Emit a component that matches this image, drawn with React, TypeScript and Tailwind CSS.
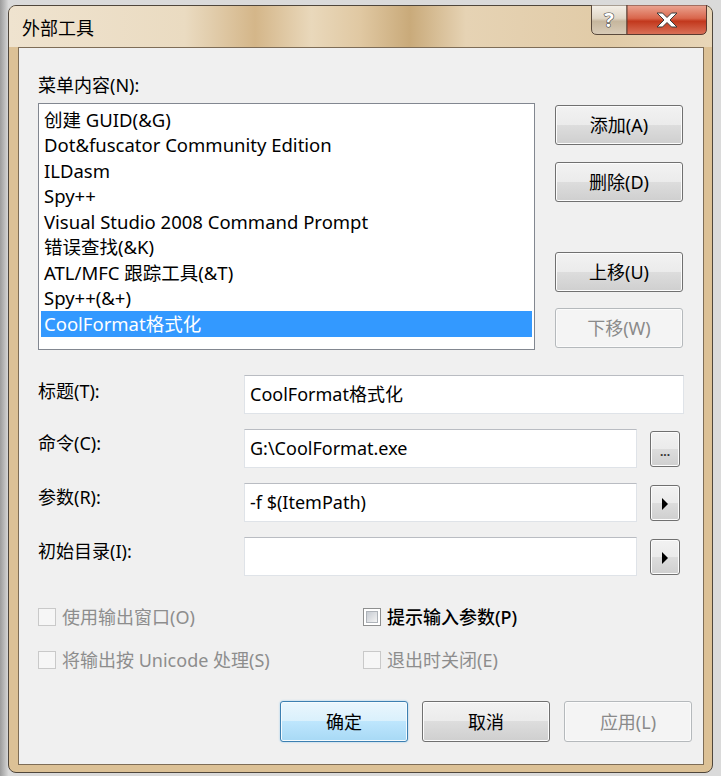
import React from "react";

const FONT = "font-['Noto_Sans','Noto_Sans_CJK_SC',sans-serif]";

function Btn({
  children,
  kind,
  className,
}: {
  children: React.ReactNode;
  kind: "normal" | "default" | "disabled";
  className?: string;
}) {
  const look =
    kind === "default"
      ? "border-[#3c7fb1] bg-[linear-gradient(#eaf6fd_0%,#d9f0fc_50%,#bee6fd_50%,#a7d9f5_100%)] shadow-[inset_0_0_0_1px_#f4fbfe,0_0_2px_#8cc6ec] text-black"
      : kind === "disabled"
      ? "border-[#b5b9bc] bg-[#f4f4f4] text-[#8a8a8a] shadow-[inset_0_0_0_1px_#fbfbfb]"
      : "border-[#707070] bg-[linear-gradient(#f2f2f2_0%,#ebebeb_50%,#dddddd_50%,#cfcfcf_100%)] shadow-[inset_0_0_0_1px_#fcfcfc] text-black";
  return (
    <div
      className={`flex items-center justify-center rounded-[3px] border text-[18px] leading-none ${look} ${className ?? ""}`}
    >
      {children}
    </div>
  );
}

function SmallBtn({ children }: { children: React.ReactNode }) {
  return (
    <div className="ml-[13px] mt-[2px] flex h-[36px] w-[30px] items-center justify-center rounded-[3px] border border-[#707070] bg-[linear-gradient(#f2f2f2_0%,#ebebeb_50%,#dddddd_50%,#cfcfcf_100%)] shadow-[inset_0_0_0_1px_#fcfcfc]">
      {children}
    </div>
  );
}

function Arrow() {
  return (
    <svg width="8" height="12" viewBox="0 0 8 12" className="mt-[2px]">
      <path d="M1 0 L7 6 L1 12 Z" fill="#000" />
    </svg>
  );
}

function Check({
  label,
  disabled,
  bold,
}: {
  label: string;
  disabled?: boolean;
  bold?: boolean;
}) {
  return (
    <div className="flex h-[18px] items-center">
      {disabled ? (
        <div className="h-[18px] w-[18px] border border-[#c9c9c9] bg-[#f6f6f6]" />
      ) : (
        <div className="flex h-[18px] w-[18px] items-center justify-center border border-[#8e8f8f] bg-white">
          <div className="h-[12px] w-[12px] border border-[#aeb3b9] bg-[linear-gradient(135deg,#c6cbd2,#f3f3f3)]" />
        </div>
      )}
      <span
        className={`ml-[6px] text-[18px] leading-[22px] ${disabled ? "text-[#8d8d8d]" : "text-black"} ${bold ? "font-medium" : ""}`}
      >
        {label}
      </span>
    </div>
  );
}

function CaptionButtons() {
  return (
    <svg width="116" height="30" viewBox="0 0 116 30" className="block">
      <defs>
        <linearGradient id="helpG" x1="0" y1="0" x2="0" y2="1">
          <stop offset="0" stopColor="#f5f1ea" />
          <stop offset="0.45" stopColor="#e0d6c6" />
          <stop offset="0.55" stopColor="#c6b69d" />
          <stop offset="1" stopColor="#d9ccb8" />
        </linearGradient>
        <linearGradient id="closeG" x1="0" y1="0" x2="0" y2="1">
          <stop offset="0" stopColor="#eba693" />
          <stop offset="0.45" stopColor="#d9664c" />
          <stop offset="0.55" stopColor="#c2381d" />
          <stop offset="1" stopColor="#da7259" />
        </linearGradient>
      </defs>
      <path d="M0.5 0 L0.5 24 Q0.5 29.5 6 29.5 L36 29.5 L36 0 Z" fill="url(#helpG)" stroke="#5a4a3c" />
      <path d="M36 0 L36 29.5 L110 29.5 Q115.5 29.5 115.5 24 L115.5 0 Z" fill="url(#closeG)" stroke="#5a3a30" />
      <text
        x="18"
        y="22"
        textAnchor="middle"
        fontFamily="Noto Sans, sans-serif"
        fontWeight="bold"
        fontSize="20"
        fill="#fff"
        stroke="#444"
        strokeWidth="1.2"
        paintOrder="stroke"
      >
        ?
      </text>
      <path
        d="M66 8 L71.5 8 L76 12.5 L80.5 8 L86 8 L79 15 L86 22 L80.5 22 L76 17.5 L71.5 22 L66 22 L73 15 Z"
        fill="#fff"
        stroke="#3a3a3a"
        strokeWidth="1"
        strokeLinejoin="round"
      />
    </svg>
  );
}

const items = [
  "创建 GUID(&G)",
  "Dot&fuscator Community Edition",
  "ILDasm",
  "Spy++",
  "Visual Studio 2008 Command Prompt",
  "错误查找(&K)",
  "ATL/MFC 跟踪工具(&T)",
  "Spy++(&+)",
  "CoolFormat格式化",
];

export default function App() {
  return (
    <div className={`h-[776px] w-[721px] bg-[#f4f4f4] ${FONT}`}>
      <div className="flex h-[776px] w-[721px] bg-linear-to-r from-[#9c9c9c] from-0% to-[#dadada] to-[1.2%] pl-[8px] pt-[5px]">
        <div className="h-[768px] w-[705px] rounded-[8px] border border-[#4f463b] bg-[#dcc196]">
          {/* title bar */}
          <div className="h-[41px] rounded-t-[7px] bg-[linear-gradient(90deg,#efe3cf_0%,#eadbc1_25%,#d4b689_35%,#e9d8bb_43%,#e0c8a2_50%,#c9aa7a_57%,#e6d3b4_65%,#e1cba7_85%,#e8d6b8_100%)] pl-[13px] pr-[5px]">
            <div className="flex items-start justify-between">
              <div className="mt-[11px] text-[18px] leading-[22px] text-black">外部工具</div>
              <div className="mt-[-1px]">
                <CaptionButtons />
              </div>
            </div>
          </div>
          {/* client area */}
          <div className="ml-[9px] h-[718px] w-[686px] border border-[#7e6d57] bg-[#f0f0f0] pl-[19px] pr-[11px] pt-[26px]">
            {/* top section */}
            <div className="flex">
              <div className="w-[497px]">
                <div className="h-[22px] text-[18px] leading-[22px] text-black">菜单内容(N):</div>
                <div className="mt-[7px] h-[247px] w-[497px] border border-[#828790] bg-white px-[2px] pt-[3px]">
                  {items.map((it, i) => (
                    <div
                      key={i}
                      className={`flex h-[25.5px] items-center whitespace-pre pl-[3px] text-[18.5px] leading-none ${
                        i === items.length - 1 ? "bg-[#3399ff] text-white" : "text-black"
                      }`}
                    >
                      {it}
                    </div>
                  ))}
                </div>
              </div>
              <div className="ml-[20px] flex w-[128px] flex-col pt-[31px]">
                <Btn kind="normal" className="h-[40px] w-[128px]">添加(A)</Btn>
                <Btn kind="normal" className="mt-[17px] h-[40px] w-[128px]">删除(D)</Btn>
                <Btn kind="normal" className="mt-[50px] h-[40px] w-[128px]">上移(U)</Btn>
                <Btn kind="disabled" className="mt-[16px] h-[40px] w-[128px]">下移(W)</Btn>
              </div>
            </div>

            {/* form */}
            <div className="mt-[25px] flex flex-col gap-[15px]">
              <div className="flex h-[39px]">
                <div className="w-[206px] pt-[5px] text-[18px] leading-[22px] text-black">标题(T):</div>
                <div className="flex h-[39px] w-[440px] items-center border border-[#dfe3e8] border-t-[#b9bcc2] bg-white pl-[5px] text-[18px] text-black">
                  CoolFormat格式化
                </div>
              </div>
              <div className="flex h-[39px]">
                <div className="w-[206px] pt-[3px] text-[18px] leading-[22px] text-black">命令(C):</div>
                <div className="flex h-[39px] w-[393px] items-center border border-[#dfe3e8] border-t-[#b9bcc2] bg-white pl-[5px] text-[18px] text-black">
                  G:\CoolFormat.exe
                </div>
                <SmallBtn>
                  <span className="mt-[6px] text-[12px] font-bold leading-none text-[#333]">...</span>
                </SmallBtn>
              </div>
              <div className="flex h-[39px]">
                <div className="w-[206px] pt-[3px] text-[18px] leading-[22px] text-black">参数(R):</div>
                <div className="flex h-[39px] w-[393px] items-center border border-[#dfe3e8] border-t-[#b9bcc2] bg-white pl-[5px] text-[18px] text-black">
                  -f $(ItemPath)
                </div>
                <SmallBtn>
                  <Arrow />
                </SmallBtn>
              </div>
              <div className="flex h-[39px]">
                <div className="w-[206px] pt-[3px] text-[18px] leading-[22px] text-black">初始目录(I):</div>
                <div className="flex h-[39px] w-[393px] items-center border border-[#dfe3e8] border-t-[#b9bcc2] bg-white pl-[5px] text-[18px] text-black"></div>
                <SmallBtn>
                  <Arrow />
                </SmallBtn>
              </div>
            </div>

            {/* checkboxes */}
            <div className="mt-[32px] grid grid-cols-[325px_1fr] gap-y-[25px]">
              <Check label="使用输出窗口(O)" disabled />
              <Check label="提示输入参数(P)" bold />
              <Check label="将输出按 Unicode 处理(S)" disabled />
              <Check label="退出时关闭(E)" disabled />
            </div>

            {/* bottom buttons */}
            <div className="mt-[32px] flex justify-end gap-[14px]">
              <Btn kind="default" className="h-[41px] w-[128px]">确定</Btn>
              <Btn kind="normal" className="h-[41px] w-[128px]">取消</Btn>
              <Btn kind="disabled" className="h-[41px] w-[128px]">应用(L)</Btn>
            </div>
          </div>
        </div>
      </div>
    </div>
  );
}
